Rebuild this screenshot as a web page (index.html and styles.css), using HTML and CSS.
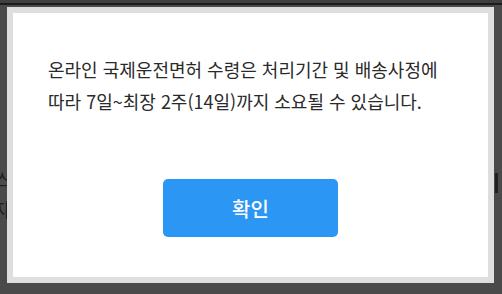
FILE: index.html
```html
<!DOCTYPE html>
<html lang="ko">
<head>
<meta charset="utf-8">
<link rel="stylesheet" href="styles.css">
</head>
<body>
<div class="topbar"></div>
<div class="backdrop-text t1">스</div>
<div class="backdrop-text t2">자</div>
<div class="backdrop-bar"></div>
<div class="modal">
  <div class="modal-inner">
    <p class="message">온라인 국제운전면허 수령은 처리기간 및 배송사정에<br>따라 7일~최장 2주(14일)까지 소요될 수 있습니다.</p>
    <div class="actions">
      <button class="confirm">확인</button>
    </div>
  </div>
</div>
</body>
</html>
```
FILE: styles.css
```css
html, body {
  margin: 0;
  padding: 0;
}
body {
  width: 502px;
  height: 294px;
  background: #4a4a4a;
  overflow: hidden;
  position: relative;
  font-family: "Noto Sans CJK KR", "Noto Sans", sans-serif;
}
.topbar {
  height: 3px;
  background: #3f3f3f;
  border-bottom: 2px solid #1c1c1c;
}
.backdrop-text {
  position: absolute;
  left: -6px;
  font-size: 18px;
  color: #1e1e1e;
}
.t1 { top: 166px; }
.t2 { top: 196px; }
.backdrop-bar {
  position: absolute;
  left: 495px;
  top: 173px;
  width: 3px;
  height: 20px;
  background: #222;
}
.modal {
  position: relative;
  margin: 2px 0 0 7px;
  width: 475px;
  height: 264px;
  border: 6px solid #dedede;
  background: #fff;
}
.modal-inner {
  padding: 40px 0 0 35px;
}
.message {
  margin: 0;
  font-size: 18px;
  line-height: 32px;
  color: #2a2a2a;
  letter-spacing: 0;
}
.actions {
  display: flex;
  justify-content: center;
  margin-top: 62px;
  margin-left: -35px;
}
.confirm {
  width: 175px;
  height: 58px;
  border: 0;
  border-radius: 5px;
  background: #2b96f4;
  color: #fff;
  font-family: "Noto Sans CJK KR", "Noto Sans", sans-serif;
  font-size: 20px;
  font-weight: 500;
  padding: 0;
}
```
